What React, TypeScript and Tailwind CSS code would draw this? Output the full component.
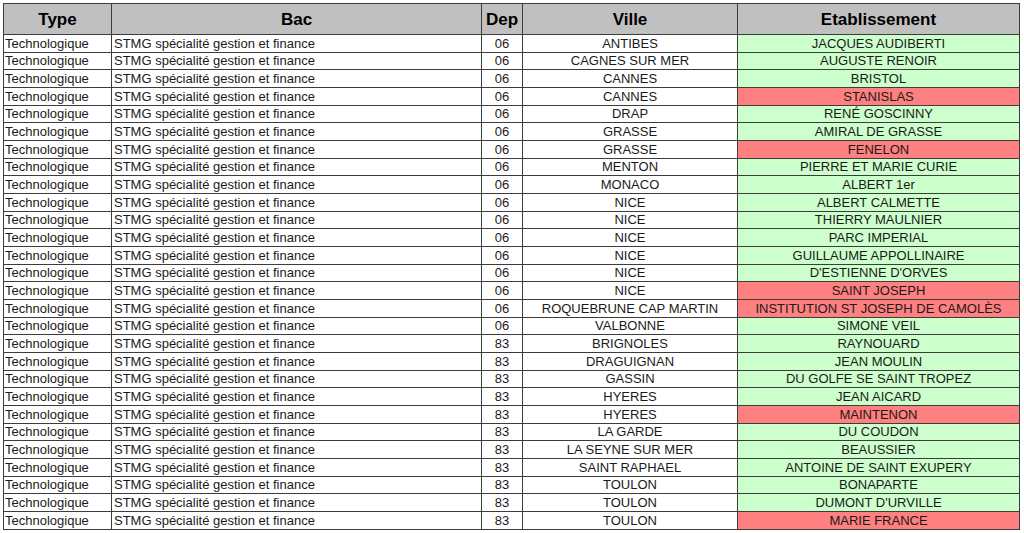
import React from 'react';

type Row = { dep: string; ville: string; etab: string; ok: boolean };

const rows: Row[] = [
  { dep: '06', ville: 'ANTIBES', etab: 'JACQUES AUDIBERTI', ok: true },
  { dep: '06', ville: 'CAGNES SUR MER', etab: 'AUGUSTE RENOIR', ok: true },
  { dep: '06', ville: 'CANNES', etab: 'BRISTOL', ok: true },
  { dep: '06', ville: 'CANNES', etab: 'STANISLAS', ok: false },
  { dep: '06', ville: 'DRAP', etab: 'RENÉ GOSCINNY', ok: true },
  { dep: '06', ville: 'GRASSE', etab: 'AMIRAL DE GRASSE', ok: true },
  { dep: '06', ville: 'GRASSE', etab: 'FENELON', ok: false },
  { dep: '06', ville: 'MENTON', etab: 'PIERRE ET MARIE CURIE', ok: true },
  { dep: '06', ville: 'MONACO', etab: 'ALBERT 1er', ok: true },
  { dep: '06', ville: 'NICE', etab: 'ALBERT CALMETTE', ok: true },
  { dep: '06', ville: 'NICE', etab: 'THIERRY MAULNIER', ok: true },
  { dep: '06', ville: 'NICE', etab: 'PARC IMPERIAL', ok: true },
  { dep: '06', ville: 'NICE', etab: 'GUILLAUME APPOLLINAIRE', ok: true },
  { dep: '06', ville: 'NICE', etab: "D'ESTIENNE D'ORVES", ok: true },
  { dep: '06', ville: 'NICE', etab: 'SAINT JOSEPH', ok: false },
  { dep: '06', ville: 'ROQUEBRUNE CAP MARTIN', etab: 'INSTITUTION ST JOSEPH DE CAMOLÈS', ok: false },
  { dep: '06', ville: 'VALBONNE', etab: 'SIMONE VEIL', ok: true },
  { dep: '83', ville: 'BRIGNOLES', etab: 'RAYNOUARD', ok: true },
  { dep: '83', ville: 'DRAGUIGNAN', etab: 'JEAN MOULIN', ok: true },
  { dep: '83', ville: 'GASSIN', etab: 'DU GOLFE SE SAINT TROPEZ', ok: true },
  { dep: '83', ville: 'HYERES', etab: 'JEAN AICARD', ok: true },
  { dep: '83', ville: 'HYERES', etab: 'MAINTENON', ok: false },
  { dep: '83', ville: 'LA GARDE', etab: 'DU COUDON', ok: true },
  { dep: '83', ville: 'LA SEYNE SUR MER', etab: 'BEAUSSIER', ok: true },
  { dep: '83', ville: 'SAINT RAPHAEL', etab: 'ANTOINE DE SAINT EXUPERY', ok: true },
  { dep: '83', ville: 'TOULON', etab: 'BONAPARTE', ok: true },
  { dep: '83', ville: 'TOULON', etab: "DUMONT D'URVILLE", ok: true },
  { dep: '83', ville: 'TOULON', etab: 'MARIE FRANCE', ok: false },
];

const cols = 'grid grid-cols-[108px_370px_41px_215px_282px]';
const cell = 'border-r border-b border-[#3c3c3c] flex items-center overflow-hidden whitespace-nowrap';

const App: React.FC = () => {
  return (
    <div className="w-[1024px] h-[533px] bg-white pt-[3px] pl-[3px] font-['Liberation_Sans',Arial,sans-serif]">
      <div className="w-[1017px] border-l border-t border-[#3c3c3c]">
        {/* Header */}
        <div className={`${cols} h-[31px] bg-[#c0c0c0] text-[17px] font-bold text-black`}>
          <div className={`${cell} justify-center pt-[2px]`}>Type</div>
          <div className={`${cell} justify-center pt-[2px]`}>Bac</div>
          <div className={`${cell} justify-center pt-[2px]`}>Dep</div>
          <div className={`${cell} justify-center pt-[2px]`}>Ville</div>
          <div className={`${cell} justify-center pt-[2px]`}>Etablissement</div>
        </div>

        {rows.map((r, i) => (
          <div key={i} className={`${cols} h-[17.68px] text-[13px] text-[#1a1a1a]`}>
            <div className={`${cell} pl-[1px]`}>Technologique</div>
            <div className={`${cell} pl-[2px]`}>STMG spécialité gestion et finance</div>
            <div className={`${cell} justify-center`}>{r.dep}</div>
            <div className={`${cell} justify-center`}>{r.ville}</div>
            <div className={`${cell} justify-center ${r.ok ? 'bg-[#ccffcc]' : 'bg-[#ff8080]'}`}>
              {r.etab}
            </div>
          </div>
        ))}
      </div>
    </div>
  );
};

export default App;
